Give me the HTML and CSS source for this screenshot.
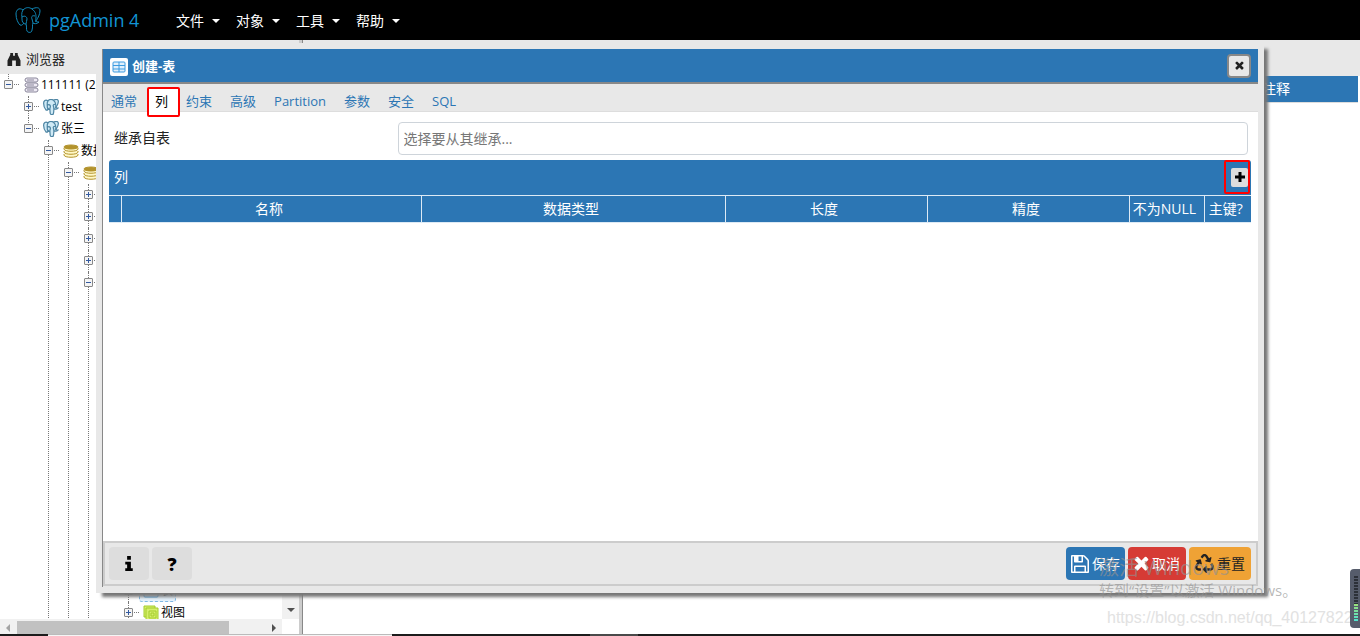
FILE: index.html
```html
<!DOCTYPE html>
<html lang="zh-CN">
<head>
<meta charset="utf-8">
<title>pgAdmin 4</title>
<link rel="stylesheet" href="styles.css">
</head>
<body>
<svg class="defs" aria-hidden="true">
  <symbol id="elephant" viewBox="0 0 26 26">
    <path d="M8 3C4 0 1 3 1 7c0 5 2 9 4 11 2 1 3-1 4-2 0 1 1 1 2 1 1 3 0 5 1 7 1 2 5 2 5-1 1-3 0-5 1-7 1 1 4 1 6-1-1 0-3 0-3-1 2-3 4-7 4-10 0-4-4-4-8-2-3-2-6-2-9 1z"/>
    <path d="M8 3C6 6 7 9 7 12c0 3 1 4 2 4M17 2c4 3 4 6 4 9 0 2-1 3 0 4M7 10c3-2 5 0 5 2s-1 3-1 5M20 9c-3-1-4 1-3 3l1 4" fill="none"/>
  </symbol>
  <symbol id="coins" viewBox="0 0 16 16">
    <path d="M1 11v1c0 3 14 3 14 0v-1" fill="#fff8c8"/><path d="M1 8v1c0 3 14 3 14 0V8" fill="#fff8c8"/><path d="M1 5v1c0 3 14 3 14 0V5" fill="#fff8c8"/>
    <ellipse cx="8" cy="4" rx="7" ry="2" fill="#b3932c"/>
  </symbol>
  <symbol id="times" viewBox="300 300 1200 1300">
    <path d="M1490 1322q0 40-28 68l-136 136q-28 28-68 28t-68-28l-294-294-294 294q-28 28-68 28t-68-28l-136-136q-28-28-28-68t28-68l294-294-294-294q-28-28-28-68t28-68l136-136q28-28 68-28t68 28l294 294 294-294q28-28 68-28t68 28l136 136q28 28 28 68t-28 68l-294 294 294 294q28 28 28 68z"/>
  </symbol>
</svg>

<header class="navbar">
  <a class="brand" href="#"><svg class="brand-logo"><use href="#elephant"/></svg>pgAdmin 4</a>
  <nav class="menu">
    <button>文件</button><button>对象</button><button>工具</button><button>帮助</button>
  </nav>
</header>

<main class="workspace">
  <aside class="browser">
    <h2 class="browser-title">
      <svg viewBox="0 0 14 14"><path d="M3 0h3v3h2V0h3v2l3 6v6H9V8H5v6H0V8l3-6z"/></svg>浏览器
    </h2>
    <div class="tree-area">
      <ul class="tree">
        <li class="last"><div class="row"><i class="toggle"></i>
          <svg class="icon server" viewBox="0 0 16 16"><rect x="2" y="1" width="13" height="4" rx="2"/><rect x="2" y="6" width="13" height="4" rx="2"/><rect x="2" y="11" width="13" height="4" rx="2"/><path d="M4 3h7M4 8h7M4 13h7"/></svg>111111 (2</div>
          <ul>
            <li><div class="row"><i class="toggle plus"></i><svg class="icon pg"><use href="#elephant"/></svg>test</div></li>
            <li class="last"><div class="row"><i class="toggle"></i><svg class="icon pg"><use href="#elephant"/></svg>张三</div>
              <ul>
                <li><div class="row"><i class="toggle"></i><svg class="icon coins"><use href="#coins"/></svg>数据</div>
                  <ul>
                    <li><div class="row"><i class="toggle"></i><svg class="icon coins"><use href="#coins"/></svg></div>
                      <ul>
                        <li><div class="row"><i class="toggle plus"></i></div></li>
                        <li><div class="row"><i class="toggle plus"></i></div></li>
                        <li><div class="row"><i class="toggle plus"></i></div></li>
                        <li><div class="row"><i class="toggle plus"></i></div></li>
                        <li><div class="row"><i class="toggle"></i></div>
                          <ul>
                            <li class="last"><div class="row"><i class="toggle"></i></div>
                              <ul>
                                <li class="folded"></li>
                                <li><div class="row"><i class="toggle plus"></i><span class="selected"><svg class="icon table"><rect x="1" y="2" width="14" height="12" rx="1"/></svg>表</span></div></li>
                                <li><div class="row"><i class="toggle plus"></i><svg class="icon view" viewBox="0 0 16 16"><path d="M1 1h11v2h3v12H3v-3H1z"/><path d="M3 12V3h9M6 6h7v7H6zM8 8h3v3H8z"/></svg>视图</div></li>
                              </ul>
                            </li>
                          </ul>
                        </li>
                      </ul>
                    </li>
                  </ul>
                </li>
              </ul>
            </li>
          </ul>
        </li>
      </ul>
      <div class="vscroll"><i class="arrow down"></i></div>
    </div>
    <div class="hscroll"><i class="arrow left"></i><i class="thumb"></i><i class="arrow right"></i></div>
  </aside>
  <div class="splitter"></div>
  <section class="detail">
    <div class="detail-tabs"></div>
    <div class="detail-head">注释</div>
  </section>
</main>
<div class="taskbar"><i class="task-start"></i><i class="task-light"></i><i class="task-dark"></i><i class="task-active"></i><i class="task-rest"></i></div>

<section class="dialog" role="dialog" aria-labelledby="dialog-title">
  <div class="dialog-frame">
    <header class="dialog-head">
      <svg class="dialog-icon" viewBox="0 0 18 18"><rect x="3" y="4" width="12" height="10" rx="1"/><path d="M3 7.500h12M3 11h12M9 4v10" /></svg>
      <h1 id="dialog-title">创建-表</h1>
      <button class="close" aria-label="关闭"><svg><use href="#times"/></svg></button>
    </header>
    <nav class="tabs">
      <button>通常</button><button class="active">列</button><button>约束</button><button>高级</button><button>Partition</button><button>参数</button><button>安全</button><button>SQL</button>
    </nav>
    <div class="panel">
      <div class="field">
        <label for="inherit">继承自表</label>
        <input id="inherit" type="text" placeholder="选择要从其继承...">
      </div>
      <div class="grid-head"><h2>列</h2>
        <span class="marked"><button class="add" aria-label="添加"><svg viewBox="0 0 10 10"><path d="M5 0v10M0 5h10"/></svg></button></span>
      </div>
      <table class="columns">
        <colgroup><col class="c-tool"><col class="c-name"><col class="c-type"><col class="c-num"><col class="c-num"><col class="c-null"><col class="c-key"></colgroup>
        <thead><tr><th></th><th>名称</th><th>数据类型</th><th>长度</th><th>精度</th><th>不为NULL</th><th>主键?</th></tr></thead>
      </table>
    </div>
    <footer class="dialog-foot">
      <button class="tool" aria-label="信息"><svg viewBox="0 0 10 16"><path d="M3 0h4v4H3zM1 6h6v7h2v3H1v-3h2V9H1z"/></svg></button>
      <button class="tool">?</button>
      <span class="spacer"></span>
      <button class="save"><svg viewBox="128 128 1536 1536"><path d="M512 1536h768v-384h-768v384zm896 0h128v-896q0-14-10-38.500t-20-34.500l-281-281q-10-10-34-20t-39-10v416q0 40-28 68t-68 28h-576q-40 0-68-28t-28-68v-416h-128v1280h128v-416q0-40 28-68t68-28h832q40 0 68 28t28 68v416zm-384-928v-320q0-13-9.500-22.500t-22.500-9.500h-192q-13 0-22.500 9.500t-9.500 22.500v320q0 13 9.500 22.500t22.500 9.500h192q13 0 22.500-9.500t9.500-22.500zm640 32v928q0 40-28 68t-68 28h-1344q-40 0-68-28t-28-68v-1344q0-40 28-68t68-28h928q40 0 88 20t76 48l280 280q28 28 48 76t20 88z"/></svg>保存</button>
      <button class="cancel"><svg><use href="#times"/></svg>取消</button>
      <button class="reset"><svg viewBox="0 0 512 512"><path d="M184.561 261.903c3.232 13.997-12.123 24.635-24.068 17.168l-40.736-25.455-50.867 81.402C55.606 356.273 70.960 384 96.012 384H148c6.627 0 12 5.373 12 12v40c0 6.627-5.373 12-12 12H96.115c-75.334 0-121.302-83.048-81.408-146.880l50.822-81.388-40.725-25.448c-12.081-7.547-8.966-25.961 4.879-29.158l110.237-25.450c8.611-1.988 17.201 3.381 19.189 11.990l25.452 110.237zm98.561-182.915l41.289 66.076-40.740 25.457c-12.051 7.528-9 25.953 4.879 29.158l110.237 25.450c8.672 1.999 17.215-3.438 19.189-11.990l25.450-110.237c3.197-13.844-11.990-24.719-24.068-17.168l-40.687 25.424-41.263-66.082c-37.521-60.033-125.209-60.171-162.816 0l-17.963 28.766c-3.510 5.620-1.800 13.021 3.820 16.533l33.919 21.195c5.620 3.512 13.024 1.803 16.536-3.817l17.961-28.743c12.712-20.341 41.973-19.676 54.257-.022zM497.288 301.120l-27.515-44.065c-3.511-5.623-10.916-7.334-16.538-3.821l-33.861 21.159c-5.620 3.512-7.330 10.915-3.818 16.536l27.564 44.112c13.257 21.211-2.057 48.960-27.136 48.960H320V336.020c0-14.213-17.242-21.383-27.313-11.313l-80 79.981c-6.249 6.248-6.249 16.379 0 22.627l80 79.989C302.689 517.308 320 510.300 320 495.989V448h95.880c75.274 0 121.335-82.997 81.408-146.880z"/></svg>重置</button>
    </footer>
  </div>
</section>

<div class="watermark">
  <p class="wm-title">激活 Windows</p>
  <p class="wm-text">转到“设置”以激活 Windows。</p>
  <p class="wm-url">https://blog.csdn.net/qq_40127822</p>
</div>
<div class="meter"><i class="meter-off"></i><i class="meter-on"></i></div>
</body>
</html>
```
FILE: styles.css
```css
* { box-sizing: border-box; }
body {
  margin: 0;
  height: 100vh;
  display: flex;
  flex-direction: column;
  overflow: hidden;
  position: relative;
  background: #e8e8e8;
  color: #222;
  font: 14px/20px "Open Sans", "Noto Sans CJK SC", sans-serif;
}
h1, h2, p, ul { margin: 0; padding: 0; font: inherit; list-style: none; }
button, input { font: inherit; border: 0; padding: 0; margin: 0; color: inherit; background: none; }
svg { fill: currentColor; flex: none; }
.defs { display: none; }

.navbar { flex: none; height: 40px; display: flex; align-items: center; background: #000; color: #fff; padding-left: 15px; }
.brand { display: flex; align-items: center; gap: 8px; width: 153px; color: #1294d4; font-size: 18px; text-decoration: none; }
.brand-logo { width: 26px; height: 26px; fill: none; stroke: #1188b8; }
.menu { display: flex; padding-top: 1px; }
.menu button { padding: 0 8px; display: flex; align-items: center; gap: 8px; }
.menu button::after { content: ""; border: 4px solid transparent; border-top-color: #fff; border-bottom: 0; }

.workspace { flex: 1; min-height: 0; display: flex; }
.browser { width: 299px; display: flex; flex-direction: column; }
.browser-title { height: 34px; flex: none; display: flex; align-items: center; gap: 5px; padding: 4px 0 0 7px; font-size: 13px; }
.browser-title svg { width: 14px; height: 13px; }
.tree-area { flex: 1; min-height: 0; display: flex; background: #fff; }
.tree { flex: 1; overflow: hidden; font-size: 12px; color: #000; }
.tree ul { padding-left: 20px; }
.tree li { position: relative; }
.tree li::before { content: ""; position: absolute; left: 8px; top: 0; bottom: 0; border-left: 1px dotted #777; }
.tree li.last::before { bottom: auto; height: 11px; }
.row { height: 22px; display: flex; align-items: center; padding-left: 4px; white-space: nowrap; }
.folded { height: 264px; }
.toggle { position: relative; flex: none; width: 9px; height: 9px; margin: 0 10px 2px 0; border: 1px solid #888; border-radius: 1px; background: linear-gradient(#335aa0, #335aa0) center / 5px 1px no-repeat #f4f4f4; }
.toggle.plus { background: linear-gradient(#335aa0, #335aa0) center / 5px 1px no-repeat, linear-gradient(#335aa0, #335aa0) center / 1px 5px no-repeat #f4f4f4; }
.toggle::after { content: ""; position: absolute; left: 9px; top: 3px; width: 5px; border-top: 1px dotted #777; }
.icon { width: 16px; height: 16px; margin-right: 2px; }
.server { fill: #eeeaf4; stroke: #89869a; }
.pg { fill: #cfeaf6; stroke: #4f86a4; stroke-width: 2; }
.coins { stroke: #b3932c; }
.table { fill: #e1f0fc; stroke: #3c9be0; }
.view { fill: #d6ef6b; stroke: #a3cc2c; }
.selected { display: flex; align-items: center; height: 22px; padding: 0 2px 0 3px; margin-left: -4px; background: #e5f2fc; border: 1px dashed #7fb8e4; border-radius: 3px; }
.vscroll { width: 17px; background: #f1f1f1; display: flex; align-items: flex-end; justify-content: center; padding-bottom: 7px; }
.arrow { border: 4px solid transparent; flex: none; }
.down { border-top-color: #505050; border-bottom: 0; }
.left { border-right-color: #a3a3a3; border-left: 0; }
.right { border-left-color: #505050; border-right: 0; }
.hscroll { height: 15px; flex: none; margin-right: 17px; display: flex; align-items: center; background: #f1f1f1; padding: 2px 6px 0; box-shadow: 17px 0 #fff; }
.thumb { width: 212px; height: 13px; margin: 0 auto 0 7px; background: #c1c1c1; }
.splitter { width: 4px; background: #ccc; border-right: 1px solid #888; }
.detail { flex: 1; background: #fff; }
.detail-tabs { height: 36px; background: #e8e8e8; }
.detail-head { height: 27px; margin-right: 2px; padding-right: 68px; text-align: right; line-height: 26px; background: #2c76b4; color: #fff; border-bottom: 1px solid #ddd; }
.taskbar { flex: none; height: 2px; display: flex; }
.task-start { width: 48px; background: #1c1c1c; }
.task-light { width: 344px; background: #f5f5f5; border-top: 1px solid #bbb; }
.task-dark { width: 198px; background: #1c1c1c; }
.task-active { width: 48px; background: #4a4a4a; }
.task-rest { flex: 1; background: #1c1c1c; }

.dialog { position: absolute; inset: 43px 96px; padding: 6px; background: #e8e8e8; box-shadow: 5px 5px 3px -1px #777; display: flex; }
.dialog-frame { flex: 1; min-width: 0; display: flex; flex-direction: column; border-left: 1px solid #888; padding-bottom: 1px; }
.dialog-head { flex: none; height: 35px; display: flex; align-items: center; gap: 4px; padding: 0 7px; background: #2c76b4; border-bottom: 2px solid #888; color: #fff; }
.dialog-head h1 { flex: 1; font-size: 13px; font-weight: 700; }
.dialog-icon { width: 18px; height: 18px; background: #fff; border-radius: 2px; fill: #e1f0fc; stroke: #3c9be0; margin-top: 3px; }
.close { width: 24px; height: 24px; display: grid; place-items: center; border: 2px solid #888; border-radius: 4px; background: #e8e8e8; color: #222; }
.close svg { width: 9px; height: 9px; }
.tabs { flex: none; height: 28px; display: flex; border-bottom: 1px solid #ddd; font-size: 13px; color: #2c76b4; }
.tabs button { padding: 6px 9px 0; }
.tabs button:first-child { padding-left: 8px; }
.tabs .active { height: 30px; z-index: 1; padding: 0 10px 2px 6px; margin: 3px -3px 0 1px; border: 2px solid #f00; border-radius: 2px; background: #fff; color: #000; }
.panel { flex: 1; background: #fff; padding: 10px 7px 0 6px; }
.field { display: grid; grid-template-columns: 1fr 3fr; align-items: center; margin: 0 3px 5px 5px; }
.field label { padding-bottom: 2px; }
.field input { height: 33px; padding: 0 5px; border: 1px solid #ced4da; border-radius: 4px; background: #fff; }
.field input::placeholder { color: #777; opacity: 1; }
.grid-head { height: 35px; display: flex; align-items: center; justify-content: space-between; padding: 0 1px 1px 5px; background: #2c76b4; color: #fff; border-radius: 3px 3px 0 0; }
.marked { width: 26px; height: 34px; display: flex; align-items: center; justify-content: flex-end; border: 2px solid #f00; border-radius: 2px; }
.add { width: 17px; height: 19px; display: grid; place-items: center; background: #ddd; border-radius: 2px; }
.add svg { width: 10px; height: 10px; stroke: #000; stroke-width: 3; }
.columns { width: 100%; table-layout: fixed; border-collapse: collapse; color: #fff; background: #2c76b4; }
.columns th { height: 27px; padding: 0 4px 0 0; font-weight: 400; border: 1px solid #ddeaf5; border-width: 1px 0 1px 1px; white-space: nowrap; }
.columns th:first-child { border-left: 0; }
.c-tool { width: 12px; } .c-type { width: 304px; } .c-num { width: 202px; } .c-null { width: 75px; } .c-key { width: 47px; }
.dialog-foot { flex: none; height: 45px; display: flex; align-items: center; gap: 3px; padding: 0 5px 0 4px; border: 2px solid #ccc; background: #e8e8e8; }
.dialog-foot button { height: 33px; border-radius: 4px; display: flex; align-items: center; justify-content: center; gap: 3px; padding: 0 5px; color: #fff; }
.dialog-foot button svg { width: 18px; height: 18px; }
.dialog-foot .tool { width: 40px; background: #ddd; color: #000; font-size: 18px; font-weight: 800; }
.dialog-foot .tool svg { width: 10px; height: 15px; }
.spacer { flex: 1; }
.dialog-foot .save { background: #2c76b4; }
.dialog-foot .cancel { background: #d63b35; padding: 0 6px; }
.dialog-foot .cancel svg { width: 15px; height: 15px; }
.dialog-foot .reset { background: #efa235; color: #222; padding: 0 6px; }
.dialog-foot .reset svg { width: 19px; height: 19px; }

.watermark { position: absolute; right: 10px; bottom: 8px; width: 251px; overflow: hidden; white-space: nowrap; color: rgba(145, 145, 145, .65); pointer-events: none; }
.wm-title { font-size: 20px; line-height: 24px; }
.wm-text { font-size: 15px; line-height: 20px; }
.wm-url { margin: 8px 0 0 8px; font: 16px/20px "Liberation Sans", sans-serif; color: #e2e2e2; }
.meter { position: absolute; right: 0; bottom: 8px; width: 10px; height: 59px; padding: 7px 2px 7px 4px; display: flex; flex-direction: column; border-radius: 4px 0 0 4px; background: #565c6b; }
.meter-off { flex: 5; background: repeating-linear-gradient(#2c3038 0 2px, #565c6b 2px 3px); }
.meter-on { flex: 3; background: repeating-linear-gradient(transparent 0 2px, #565c6b 2px 3px), linear-gradient(#9be07a, #4fe3d0); }
```
